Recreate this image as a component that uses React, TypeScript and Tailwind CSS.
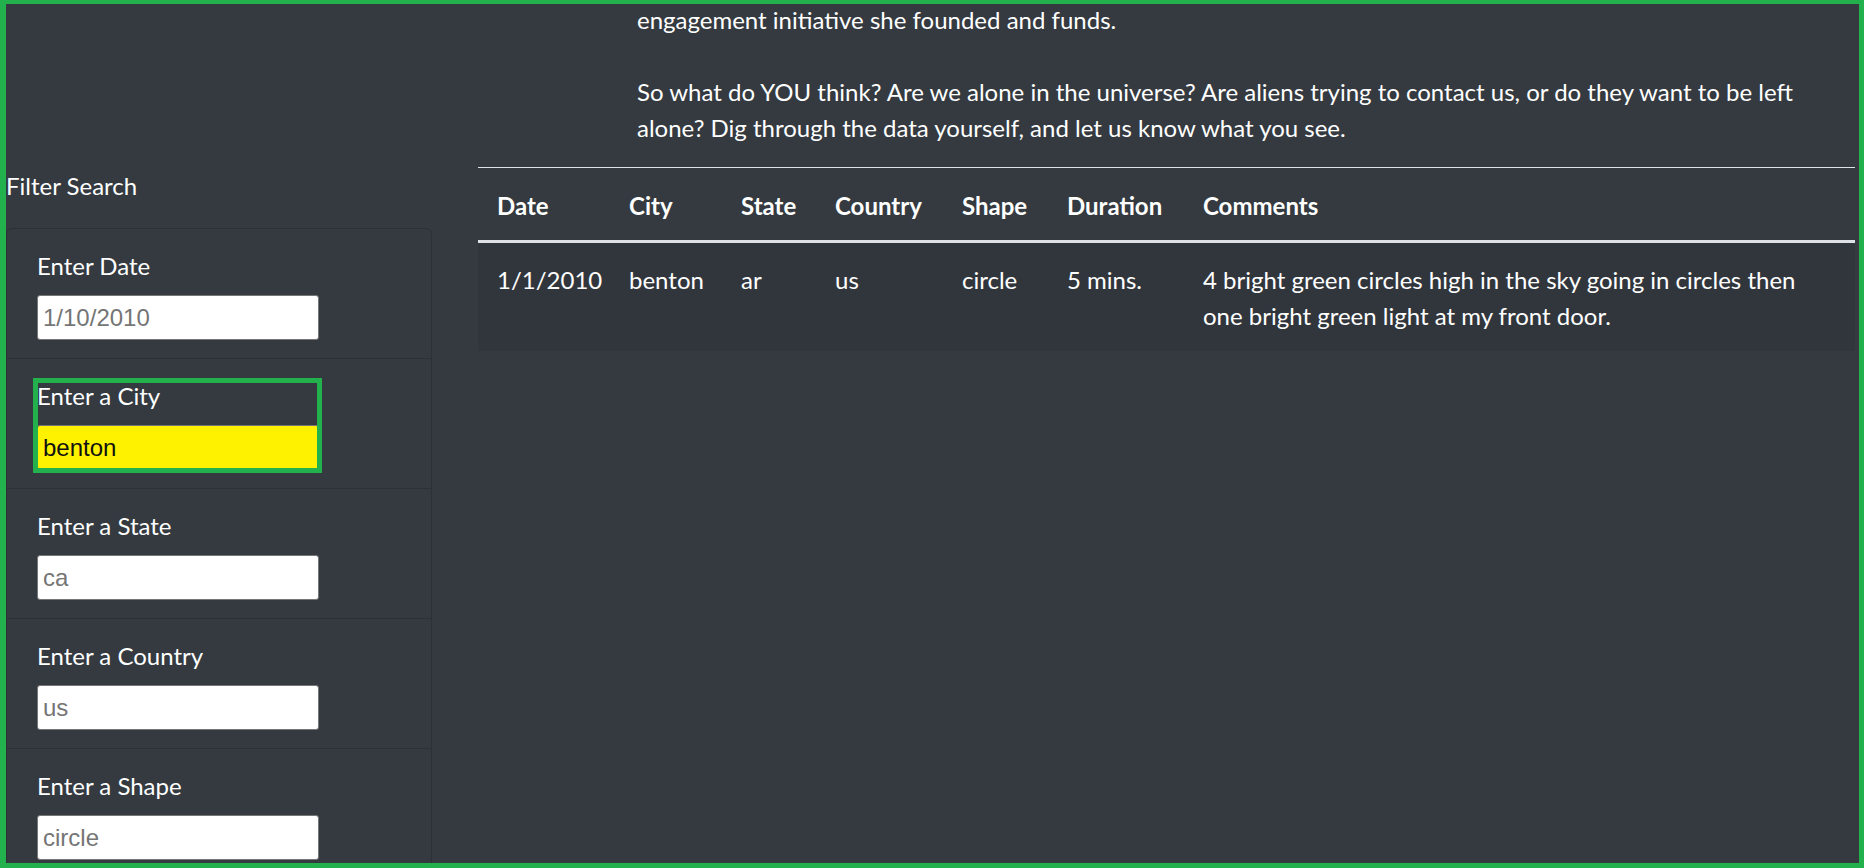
import React from "react";

const filters = [
  { label: "Enter Date", placeholder: "1/10/2010" },
  { label: "Enter a City", value: "benton", marked: true },
  { label: "Enter a State", placeholder: "ca" },
  { label: "Enter a Country", placeholder: "us" },
  { label: "Enter a Shape", placeholder: "circle" },
];

const columns = [
  { name: "Date", width: "w-[132px]" },
  { name: "City", width: "w-[112px]" },
  { name: "State", width: "w-[94px]" },
  { name: "Country", width: "w-[127px]" },
  { name: "Shape", width: "w-[105px]" },
  { name: "Duration", width: "w-[136px]" },
  { name: "Comments", width: "" },
];

function FilterItem({ label, placeholder, value, marked }: { label: string; placeholder?: string; value?: string; marked?: boolean }) {
  return (
    <li className="border-t border-[#2c3136] px-[30px] py-[18px] first:border-t-0">
      <div className="relative w-[282px]">
        <label className="mb-[11px] block pt-[1px]">{label}</label>
        <input
          type="text"
          placeholder={placeholder}
          defaultValue={value}
          className={`block h-[45px] w-[282px] rounded-[3px] border border-[#767676] px-[5px] font-['Liberation_Sans',Arial,sans-serif] text-[24px] text-[#111] outline-none placeholder:text-[#757575] ${
            marked ? "bg-[#fff200]" : "bg-white"
          }`}
        />
        {/* highlight box drawn over the city filter */}
        {marked && (
          <div className="pointer-events-none absolute -bottom-[3px] -left-[4px] -right-[3px] top-[1px] border-[5px] border-[#22b14c]" />
        )}
      </div>
    </li>
  );
}

export default function App() {
  return (
    <div className="h-[868px] w-[1864px] overflow-hidden border-b-[5px] border-l-[6px] border-r-[5px] border-t-4 border-[#22b14c] bg-[#343a40] font-['Lato',sans-serif] text-[24px] leading-[36px] text-white">
      <div className="-mt-[2px]">
        <p className="ml-[631px]">
          engagement initiative she founded and funds.
          <br />
          <br />
          So what do YOU think? Are we alone in the universe? Are aliens trying to contact us, or do they want to be left
          <br />
          alone? Dig through the data yourself, and let us know what you see.
        </p>

        <div className="mt-[21px] flex">
          {/* Sidebar filters */}
          <aside className="w-[426px] shrink-0">
            <div className="pt-[1px]">Filter Search</div>
            <ul className="mt-[24px] rounded-t-[6px] border border-[#2c3136]">
              {filters.map((f) => (
                <FilterItem key={f.label} {...f} />
              ))}
            </ul>
          </aside>

          {/* Results table */}
          <main className="ml-[46px] mr-[4px] flex-1">
            <table className="w-full table-fixed border-collapse">
              <colgroup>
                {columns.map((c) => (
                  <col key={c.name} className={c.width} />
                ))}
              </colgroup>
              <thead>
                <tr>
                  {columns.map((c) => (
                    <th
                      key={c.name}
                      className="border-b-[3px] border-t border-b-[#dee2e6] border-t-[#dee2e6] px-[19px] pb-[16px] pt-[20px] text-left font-bold"
                    >
                      {c.name}
                    </th>
                  ))}
                </tr>
              </thead>
              <tbody>
                <tr className="bg-[#31363d] align-top">
                  <td className="px-[19px] pb-[17px] pt-[19px]">1/1/2010</td>
                  <td className="px-[19px] pb-[17px] pt-[19px]">benton</td>
                  <td className="px-[19px] pb-[17px] pt-[19px]">ar</td>
                  <td className="px-[19px] pb-[17px] pt-[19px]">us</td>
                  <td className="px-[19px] pb-[17px] pt-[19px]">circle</td>
                  <td className="px-[19px] pb-[17px] pt-[19px]">5 mins.</td>
                  <td className="px-[19px] pb-[17px] pt-[19px]">
                    4 bright green circles high in the sky going in circles then
                    <br />
                    one bright green light at my front door.
                  </td>
                </tr>
              </tbody>
            </table>
          </main>
        </div>
      </div>
    </div>
  );
}
